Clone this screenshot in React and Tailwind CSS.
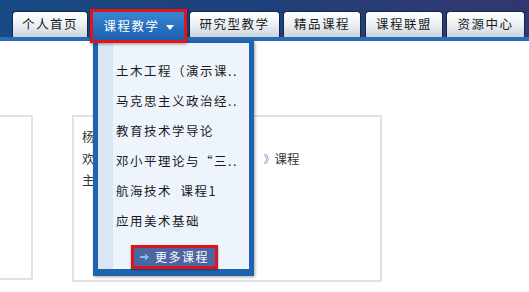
import React from "react";

const font = { fontFamily: '"Noto Sans CJK SC", "Noto Sans", sans-serif' };

function Tab({ label, w, ml }) {
  return (
    <div
      className={`h-[26px] ${w} ${ml} rounded-t-[4px] bg-gradient-to-b from-[#ffffff] via-[#eef1f4] to-[#c9d3dd] border border-b-0 border-[#0d2a52] flex items-center justify-center text-[12.5px] tracking-[1.5px] text-[#1a1a1a]`}
    >
      {label}
    </div>
  );
}

const items = [
  "土木工程（演示课..",
  "马克思主义政治经..",
  "教育技术学导论",
  "邓小平理论与“三..",
  "航海技术  课程1",
  "应用美术基础",
];

export default function App() {
  return (
    <div className="relative w-[529px] h-[292px] overflow-hidden bg-white" style={font}>
      {/* header */}
      <div className="h-[37px] bg-gradient-to-r from-[#184a85] via-[#1f3f78] to-[#33366f] flex items-end pl-[12px]">
        <Tab label="个人首页" w="w-[76px]" ml="" />
        <div className="ml-[2px] w-[97px] h-[34px] mb-[-6px] border-[3px] border-[#e0141b] bg-gradient-to-b from-[#3a86d2] to-[#1b5fae] flex items-center justify-center text-white text-[12.5px] tracking-[1.5px] z-20 shadow-[0_1px_3px_rgba(0,0,0,0.4)]">
          <span>课程教学</span>
          <span className="ml-[6px] mt-[3px] w-0 h-0 border-l-[4px] border-r-[4px] border-t-[5px] border-l-transparent border-r-transparent border-t-white" />
        </div>
        <Tab label="研究型教学" w="w-[91px]" ml="ml-[2px]" />
        <Tab label="精品课程" w="w-[78px]" ml="ml-[3px]" />
        <Tab label="课程联盟" w="w-[78px]" ml="ml-[4px]" />
        <Tab label="资源中心" w="w-[79px]" ml="ml-[3px]" />
      </div>
      <div className="h-[4px] bg-[#2a6cb6]" />

      {/* content boxes */}
      <div className="flex mt-[74px] h-[167px]">
        <div className="w-[33px] h-[165px] border-2 border-l-0 border-[#e2e2e2]" />
        <div className="ml-[39px] w-[310px] h-[167px] border-2 border-[#e2e2e2] pl-[8px] pt-[9px] text-[12.5px] text-[#333] leading-[21.5px]">
          <div>杨</div>
          <div className="flex">
            <span>欢</span>
            <span className="ml-[169px] text-[#5b8fd0] text-[11px]">》</span>
            <span>课程</span>
          </div>
          <div>主</div>
        </div>
      </div>

      {/* dropdown */}
      <div className="absolute left-[93px] top-[41px] w-[161px] h-[235px] bg-[#1f64ae] p-[5px] pt-[2px] pb-[7px] z-10 shadow-[1px_1px_3px_rgba(0,0,0,0.35)]">
        <div className="relative h-full bg-[#eef4fb] flex">
          <div className="w-[15px] h-full bg-[#d9e6f4]" />
          <div className="flex-1 pl-[3px] pt-[13px] flex flex-col">
            {items.map((t) => (
              <div key={t} className="h-[31px] flex items-center text-[12.5px] tracking-[1.5px] text-[#1a1a1a] whitespace-pre">
                {t}
              </div>
            ))}
            <div className="mt-[9px] ml-[15px] w-[87px] h-[24px] border-[3px] border-[#e0141b] bg-[#4b66a0] flex items-center pl-[6px] text-white text-[12px] tracking-[1.5px] shadow-[0_1px_2px_rgba(0,0,0,0.4)]">
              <svg width="9" height="8" viewBox="0 0 9 8" className="mr-[6px]">
                <path d="M0 3h5V0.5L9 4 5 7.5V5H0z" fill="#7fc0f0" />
              </svg>
              更多课程
            </div>
          </div>
        </div>
      </div>
    </div>
  );
}
